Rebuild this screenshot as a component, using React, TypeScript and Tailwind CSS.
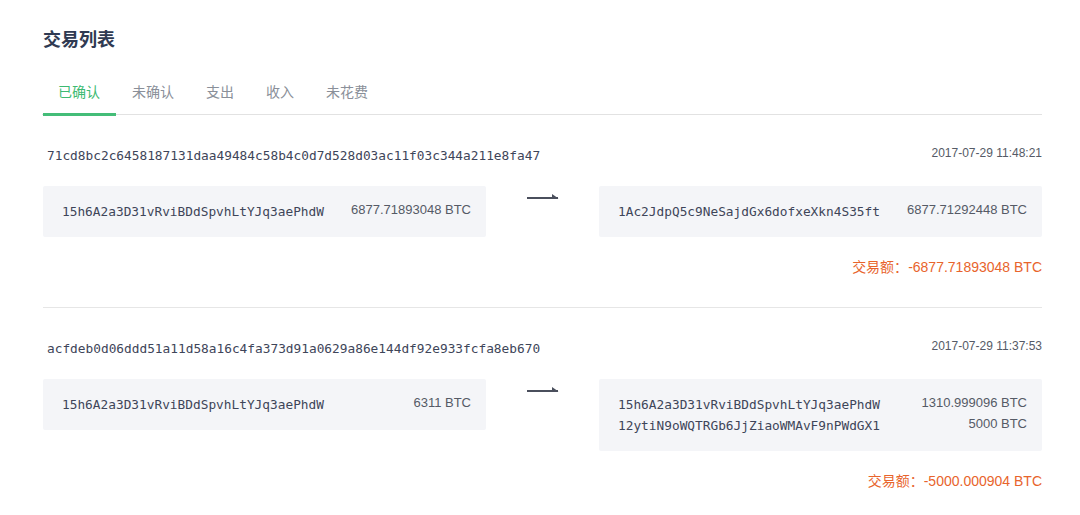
import React from 'react';

type Entry = { address: string; amount: string };
type Tx = { hash: string; time: string; inputs: Entry[]; outputs: Entry[]; total: string };

const tabs = ['已确认', '未确认', '支出', '收入', '未花费'];

const txs: Tx[] = [
  {
    hash: '71cd8bc2c6458187131daa49484c58b4c0d7d528d03ac11f03c344a211e8fa47',
    time: '2017-07-29 11:48:21',
    inputs: [{ address: '15h6A2a3D31vRviBDdSpvhLtYJq3aePhdW', amount: '6877.71893048 BTC' }],
    outputs: [{ address: '1Ac2JdpQ5c9NeSajdGx6dofxeXkn4S35ft', amount: '6877.71292448 BTC' }],
    total: '-6877.71893048 BTC',
  },
  {
    hash: 'acfdeb0d06ddd51a11d58a16c4fa373d91a0629a86e144df92e933fcfa8eb670',
    time: '2017-07-29 11:37:53',
    inputs: [{ address: '15h6A2a3D31vRviBDdSpvhLtYJq3aePhdW', amount: '6311 BTC' }],
    outputs: [
      { address: '15h6A2a3D31vRviBDdSpvhLtYJq3aePhdW', amount: '1310.999096 BTC' },
      { address: '12ytiN9oWQTRGb6JjZiaoWMAvF9nPWdGX1', amount: '5000 BTC' },
    ],
    total: '-5000.000904 BTC',
  },
];

const mono = "font-['DejaVu_Sans_Mono',monospace]";
const sans = "font-['Liberation_Sans','Noto_Sans_CJK_SC',sans-serif]";

function EntryBox({ items }: { items: Entry[] }) {
  return (
    <div className="flex-1 rounded-[2px] bg-[#f4f5f8] py-[15px] pl-[19px] pr-[15px]">
      {items.map((it, i) => (
        <div key={i} className="flex items-start justify-between">
          <span className={`${mono} text-[12.8px] leading-[21px] text-[#3e4559]`}>{it.address}</span>
          <span className={`${sans} text-[13px] leading-[17px] text-[#555a66]`}>{it.amount}</span>
        </div>
      ))}
    </div>
  );
}

function Arrow() {
  return (
    <svg width="32" height="6" viewBox="0 0 32 6" className="block">
      <rect x="0" y="3" width="31" height="2" fill="#4a4f5c" />
      <polygon points="25,0 31.5,4.5 25,4.5" fill="#4a4f5c" />
    </svg>
  );
}

export default function App() {
  return (
    <div className={`${sans} min-h-[515px] bg-white`}>
      <div className="ml-[43px] w-[999px] pt-[28px]">
        <h1 className="text-[18px] font-bold leading-[24px] text-[#2f3a52]">交易列表</h1>

        <div className="mt-[19px] flex h-[44px] border-b border-[#e2e2e2] -ml-px">
          {tabs.map((t, i) => (
            <div
              key={t}
              className={`relative px-[16px] text-[14px] leading-[43px] ${
                i === 0 ? 'text-[#3dba72]' : 'text-[#8a8f99]'
              }`}
            >
              {t}
              {i === 0 && <span className="absolute bottom-[-2px] left-px right-0 h-[3px] bg-[#44bd78]" />}
            </div>
          ))}
        </div>

        {txs.map((tx, idx) => (
          <div
            key={tx.hash}
            className={`pb-[30px] ${idx === 0 ? 'pt-[31px]' : 'border-t border-[#e6e6e6] pt-[31px]'}`}
          >
            <div className="flex items-start justify-between">
              <span className={`${mono} pl-[4px] text-[12.8px] leading-[20px] text-[#3e4559]`}>{tx.hash}</span>
              <span className="text-[12px] leading-[14px] text-[#555a66]">{tx.time}</span>
            </div>

            <div className="mt-[20px] flex items-start">
              <EntryBox items={tx.inputs} />
              <div className="flex w-[113px] justify-center pt-[8px]">
                <Arrow />
              </div>
              <EntryBox items={tx.outputs} />
            </div>

            <div className="mt-[20px] text-right text-[14px] leading-[20px] text-[#e8642c]">
              交易额：{tx.total}
            </div>
          </div>
        ))}
      </div>
    </div>
  );
}
